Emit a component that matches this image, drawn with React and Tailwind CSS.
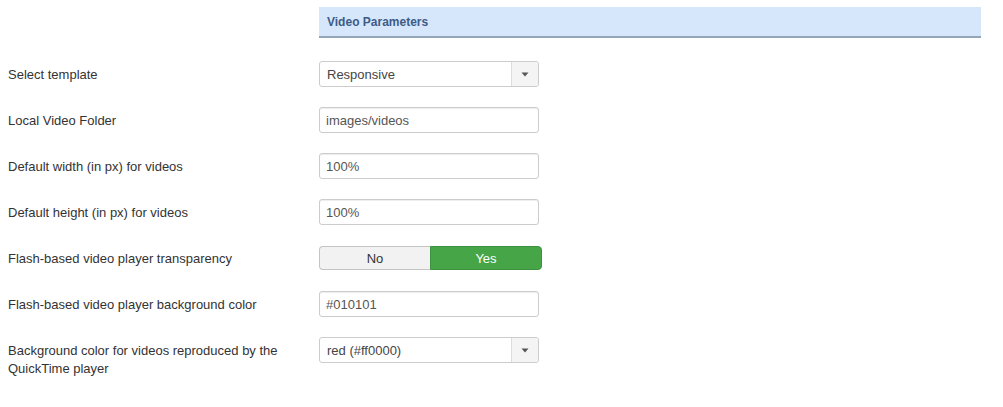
import React from "react";

const font = { fontFamily: '"Liberation Sans", Arial, sans-serif' };

function Row({ label, children }) {
  return (
    <div className="flex items-start">
      <div className="w-[311px] shrink-0 pt-[5px] pr-4 text-[13px] leading-[18px] text-[#333]">
        {label}
      </div>
      <div className="h-[26px] flex items-center">{children}</div>
    </div>
  );
}

function TextInput({ value }) {
  return (
    <div className="w-[220px] h-[26px] border border-[#cccccc] rounded-[3px] bg-white flex items-center pl-[6px] pt-[1px] text-[13px] text-[#555] shadow-[inset_0_1px_1px_rgba(0,0,0,0.075)]">
      {value}
    </div>
  );
}

function Select({ value }) {
  return (
    <div className="w-[220px] h-[26px] border border-[#cccccc] rounded-[3px] bg-white flex items-stretch text-[13px] text-[#444]">
      <div className="flex-1 flex items-center pl-[7px] pt-[1px]">{value}</div>
      <div className="w-[27px] border-l border-[#dddddd] bg-[#f4f4f4] rounded-r-[3px] flex items-center justify-center">
        <svg width="8" height="5" viewBox="0 0 8 5">
          <path d="M0.5 0.5 L7.5 0.5 L4 4.5 Z" fill="#555" />
        </svg>
      </div>
    </div>
  );
}

export default function App() {
  return (
    <div className="bg-white w-[1003px] h-[407px] pl-[8px]" style={font}>
      <div className="ml-[311px] mt-[7px] w-[662px] h-[31px] bg-[#d6e7fb] border-b-2 border-[#94a6b8] flex items-center px-[8px] pt-[1px]">
        <span className="text-[12px] font-bold text-[#3d5b87]">Video Parameters</span>
      </div>
      <div className="mt-[23px] flex flex-col gap-[20px]">
        <Row label="Select template">
          <Select value="Responsive" />
        </Row>
        <Row label="Local Video Folder">
          <TextInput value="images/videos" />
        </Row>
        <Row label="Default width (in px) for videos">
          <TextInput value="100%" />
        </Row>
        <Row label="Default height (in px) for videos">
          <TextInput value="100%" />
        </Row>
        <Row label="Flash-based video player transparency">
          <div className="flex w-[223px] h-[24px] text-[13px]">
            <div className="w-[111px] flex items-center justify-center pt-[1px] bg-[#f2f2f2] border border-[#c4c4c4] border-r-0 rounded-l-[4px] text-[#333]">
              No
            </div>
            <div className="flex-1 flex items-center justify-center pt-[1px] bg-[#46a546] border border-[#3d9140] rounded-r-[4px] text-white">
              Yes
            </div>
          </div>
        </Row>
        <Row label="Flash-based video player background color">
          <TextInput value="#010101" />
        </Row>
        <Row
          label={
            <>
              Background color for videos reproduced by the
              <br />
              QuickTime player
            </>
          }
        >
          <Select value="red (#ff0000)" />
        </Row>
      </div>
    </div>
  );
}
